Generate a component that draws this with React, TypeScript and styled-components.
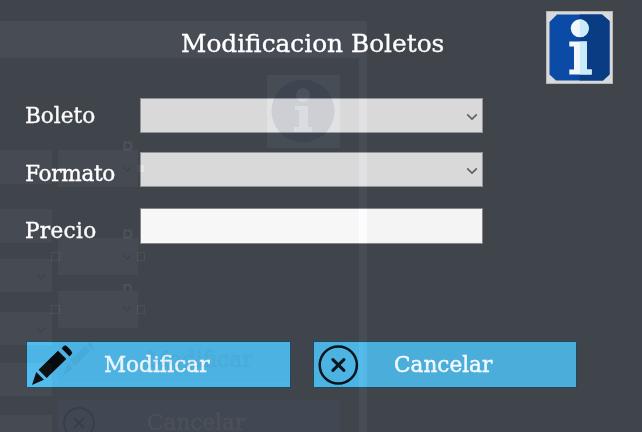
import React from 'react';
import styled, { createGlobalStyle } from 'styled-components';

const GlobalStyle = createGlobalStyle`
  *, *::before, *::after { box-sizing: border-box; }
  body { margin: 0; background: #40444b; }
`;

const Window = styled.main`
  position: relative;
  width: 642px;
  height: 432px;
  overflow: hidden;
  background: #40444b;
  color: #fbfbfb;
  font-family: Rockwell, 'DejaVu Serif', serif;
  isolation: isolate;
`;

const Header = styled.header`
  display: grid;
  grid-template-columns: 181px 365px 67px;
  height: 98px;
  padding-top: 11px;
`;

const Title = styled.h1`
  grid-column: 2;
  margin: 17px 0 0;
  font-size: 24.8px;
  line-height: 32px;
  font-weight: 400;
  -webkit-text-stroke: 0.35px currentColor;
  white-space: nowrap;
`;

const Form = styled.form`
  display: grid;
  grid-template-columns: 114px 343px;
  grid-template-rows: 35px 35px 36px;
  row-gap: 19px;
  padding-left: 26px;
`;

const Label = styled.label<{ $drop: number; $tracking: number }>`
  height: 28px;
  margin-top: ${(p) => p.$drop}px;
  margin-left: -1px;
  font-size: 21.6px;
  line-height: 28px;
  letter-spacing: ${(p) => p.$tracking}px;
  -webkit-text-stroke: 0.4px currentColor;
  white-space: nowrap;
`;

const Select = styled.div`
  display: flex;
  align-items: center;
  justify-content: flex-end;
  padding: 2px 4px 0 0;
  border: 1px solid #929497;
  background: #d9d9da;
`;

const Input = styled.input`
  width: 100%;
  height: 36px;
  margin-top: 2px;
  border: 1px solid #828588;
  border-radius: 0;
  outline: 0;
  background: linear-gradient(90deg, #f7f7f7 219px, #f4f4f4 219px);
`;

const Actions = styled.div`
  display: grid;
  grid-template-columns: 265px 264px;
  column-gap: 22px;
  margin-top: 99px;
  padding-left: 26px;
`;

const Button = styled.button<{ $fill: string; $gap: number }>`
  display: flex;
  align-items: center;
  gap: ${(p) => p.$gap}px;
  height: 47px;
  padding: 1px 0 0 5px;
  border: 1px solid #1d4a60;
  background: ${(p) => p.$fill};
  color: #f3faff;
  font: 21.6px/30px Rockwell, 'DejaVu Serif', serif;
  -webkit-text-stroke: 0.45px currentColor;
`;

/* Translucent window that fades out over the dialog. */
const FadeWindow = styled.div`
  position: absolute;
  top: 21px;
  left: 0;
  width: 367px;
  height: 411px;
  display: flex;
  align-items: flex-start;
  gap: 6px;
  padding-top: 92px;
  border-top: 37px solid #07080a;
  border-right: 8px solid #08080a;
  border-radius: 0 3px 0 0;
  pointer-events: none;
  mix-blend-mode: plus-lighter;
`;

const FadeColumn = styled.div<{ $width: number }>`
  display: flex;
  flex-direction: column;
  width: ${(p) => p.$width}px;
`;

const FadeField = styled.div<{ $height: number; $after: number }>`
  height: ${(p) => p.$height}px;
  margin-bottom: ${(p) => p.$after}px;
  flex: none;
  background: #060708;
`;

const Layer = styled.svg<{ $lighten?: boolean }>`
  position: absolute;
  inset: 0;
  pointer-events: none;
  mix-blend-mode: ${(p) => (p.$lighten ? 'plus-lighter' : 'normal')};
`;

/* The fading window's own buttons, seen below and through the blue ones. */
const FadeActions = styled.div`
  position: absolute;
  top: 337px;
  left: 58px;
  display: flex;
  flex-direction: column;
  gap: 18px;
  width: 282px;
  pointer-events: none;
`;

const FadeButton = styled.div<{ $fill: string; $ink: string }>`
  display: flex;
  align-items: center;
  height: 45px;
  padding-left: 89px;
  background: ${(p) => p.$fill};
  color: ${(p) => p.$ink};
  font-size: 21.6px;
  line-height: 26px;
  -webkit-text-stroke: 0.5px currentColor;
`;

const Icon = styled.svg`
  display: block;
  flex: none;
  overflow: visible;
`;

const InfoIcon = () => (
  <Icon width="67" height="73" viewBox="0 0 67 73">
    <rect x=".5" y=".5" width="66" height="72" fill="#d8d9da" stroke="#b9b5b0" />
    <path d="M11 3.5H56L63.5 10V63.5L57 69.5H10L3.5 63.5V11Z" fill="#0c4ba5" />
    <path d="M33.5 3.5H56L63.5 10V63.5L57 69.5H33.5Z" fill="#093c82" />
    <circle cx="33.8" cy="17.3" r="9" fill="#f2f7fc" />
    <path d="M33.8 8.3a9 9 0 0 1 0 18Z" fill="#c9ebfa" />
    <path d="M23.3 30.5H41V58.5H45.7V63.5H23.3V58.5H28V35.5H23.3Z" fill="#f2f7fc" />
    <path d="M33.8 30.5H41V58.5H45.7V63.5H33.8Z" fill="#c9ebfa" />
  </Icon>
);

const Chevron = () => (
  <Icon width="12" height="8" viewBox="0 0 12 8">
    <path d="M1.2 1.4L6 6.1L10.8 1.4" fill="none" stroke="#5b5c5e" strokeWidth="1.5" />
  </Icon>
);

const Pencil = () => (
  <Icon width="42" height="42" viewBox="0 0 42 42">
    <path d="M0 41L4.3 28L12 35.8Z M6.5 25.7L26 6.8L34.3 15.1L14.7 34.1Z" fill="#080b0d" />
    <path d="M29.7 4.5L31.2 2.500Q33 .5 35.2 2.500L39 6.500Q41 8.500 39.3 10.500L37.5 12.500Z" fill="#080b0d" />
  </Icon>
);

const Cross = () => (
  <Icon width="40" height="42" viewBox="0 0 40 42">
    <circle cx="19.3" cy="21" r="18.6" fill="none" stroke="#06131b" strokeWidth="2.5" />
    <path d="M13.9 15.6L24.9 26.4M24.9 15.6L13.9 26.4" stroke="#06131b" strokeWidth="3" strokeLinecap="round" />
  </Icon>
);

const leftFields = [[34, 25], [34, 16], [33, 20], [33, 18], [33, 19], [17, 0]];
const middleFields = [[37, 51], [37, 16], [37, 0]];

export default function App() {
  return (
    <>
      <GlobalStyle />
      <Window>
        <Header>
          <Title>Modificacion Boletos</Title>
          <InfoIcon />
        </Header>
        <Form>
          <Label $drop={4} $tracking={0}>Boleto</Label>
          <Select><Chevron /></Select>
          <Label $drop={8} $tracking={-0.3}>Formato</Label>
          <Select><Chevron /></Select>
          <Label htmlFor="precio" $drop={11} $tracking={0.3}>Precio</Label>
          <Input id="precio" />
        </Form>
        <Actions>
          <Button $fill="#4db5e5" $gap={30}>
            <Pencil />Modificar
          </Button>
          <Button $fill="linear-gradient(90deg, #4db5e4 45px, #4badda 53px)" $gap={35}>
            <Cross />Cancelar
          </Button>
        </Actions>

        <FadeWindow>
          <FadeColumn $width={52}>
            {leftFields.map(([h, after], i) => <FadeField key={i} $height={h} $after={after} />)}
          </FadeColumn>
          <FadeColumn $width={80}>
            {middleFields.map(([h, after], i) => <FadeField key={i} $height={h} $after={after} />)}
          </FadeColumn>
        </FadeWindow>

        <FadeActions>
          <FadeButton $fill="rgba(70,95,115,.03)" $ink="rgba(55,130,165,.08)">Modificar</FadeButton>
          <FadeButton $fill="rgba(70,92,114,.2)" $ink="#4b5157">Cancelar</FadeButton>
        </FadeActions>

        <Layer width="642" height="432" viewBox="0 0 642 432">
          <circle cx="303" cy="111" r="31.5" fill="rgba(50,90,150,.07)" />
          <path d="M63 375L68 363L73 369ZM70 360L85 346L90 351L75 366ZM87 345L90 342L94 348L92 350Z" fill="rgba(30,80,110,.08)" />
          <circle cx="79" cy="423" r="15" fill="none" stroke="#383f46" strokeWidth="2" />
          <path d="M74 418L84 428M84 418L74 428" stroke="#383f46" strokeWidth="2" />
          <path d="M37 275l4 4 4-4M37 328l4 4 4-4M123 167l4 4 4-4M123 255l4 4 4-4M123 307l4 4 4-4" fill="none" stroke="#3d4248" strokeWidth="1.3" />
        </Layer>
        <Layer $lighten width="642" height="432" viewBox="0 0 642 432">
          <path fillRule="evenodd" d="M267 75H340V148H267ZM334.5 111a31.5 31.5 0 1 0-63 0 31.5 31.5 0 1 0 63 0Z" fill="#07090a" />
          <circle cx="303" cy="95" r="7" fill="#0c0d0d" />
          <path d="M295 106H308V127H312V132H294V127H299V110H295Z" fill="#0c0d0d" />
          <path d="M51.5 252.5h8v8h-8ZM137.5 252.5h7v8h-7ZM51.5 305.5h8v8h-8ZM137.5 305.5h7v8h-7Z" fill="none" stroke="#0b0c0d" />
          <path d="M138 165h6v7h-6Z" fill="#0c0c0c" />
          <path d="M124.5 142.5h4q3 0 3 3.5t-3 3.5h-4ZM124.5 230.5h4q3 0 3 3.5t-3 3.5h-4ZM124.5 291v-6h4q2 0 2 2v4" fill="none" stroke="#0d0e10" strokeWidth="2" />
        </Layer>
      </Window>
    </>
  );
}
